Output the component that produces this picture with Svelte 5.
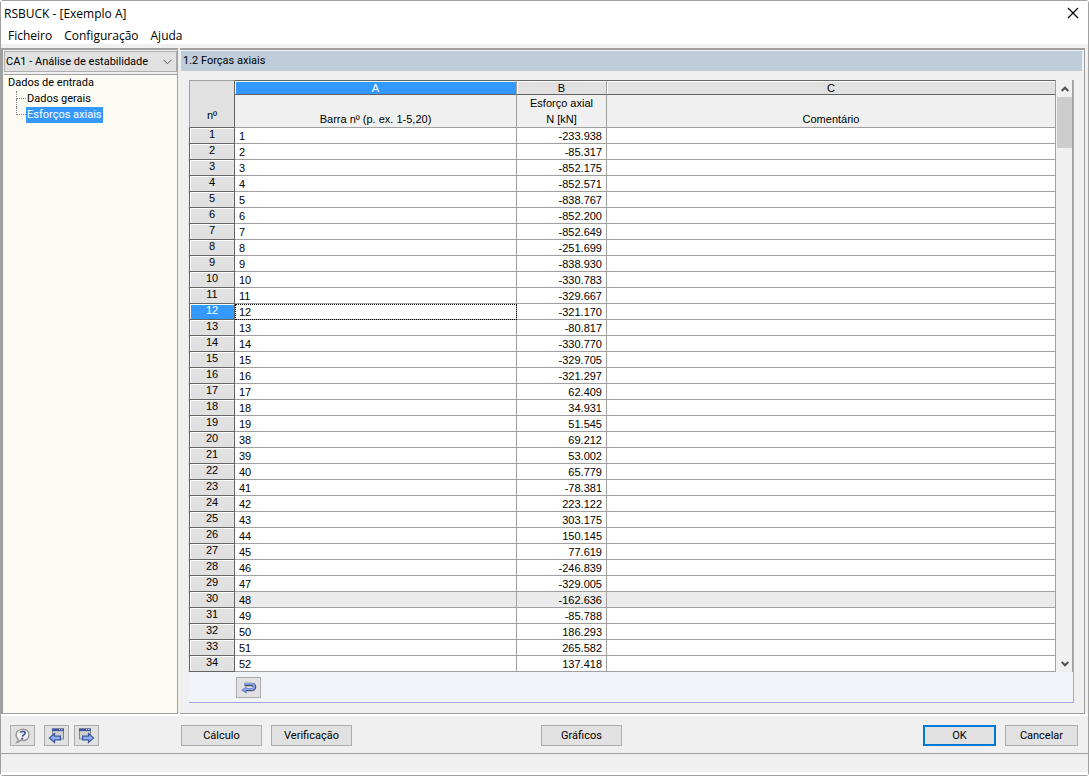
<script lang="ts">
  interface Row {
    bar: string;
    force: string;
  }

  const cases = ["CA1 - Análise de estabilidade"];
  const menus = ["Ficheiro", "Configuração", "Ajuda"];
  const pages = ["Dados gerais", "Esforços axiais"];

  const forces = [
    "-233.938", "-85.317", "-852.175", "-852.571", "-838.767", "-852.200",
    "-852.649", "-251.699", "-838.930", "-330.783", "-329.667", "-321.170",
    "-80.817", "-330.770", "-329.705", "-321.297", "62.409", "34.931",
    "51.545", "69.212", "53.002", "65.779", "-78.381", "223.122",
    "303.175", "150.145", "77.619", "-246.839", "-329.005", "-162.636",
    "-85.788", "186.293", "265.582", "137.418"
  ];

  // bar numbers jump from 19 to 38
  const rows: Row[] = forces.map((force, i) => ({
    bar: String(i < 19 ? i + 1 : i + 19),
    force
  }));

  let activeCase = $state(cases[0]);
  let activePage = $state("Esforços axiais");
  let selected = $state(11);
</script>

<div class="window">
  <header class="titlebar">
    <h1>RSBUCK - [Exemplo A]</h1>
    <button type="button" class="close" aria-label="Fechar">
      <svg width="12" height="12" viewBox="0 0 12 12">
        <path d="M1 1L11 11M11 1L1 11" stroke="#000" stroke-width="1.2" fill="none" />
      </svg>
    </button>
  </header>

  <nav class="menubar">
    {#each menus as menu}
      <button type="button">{menu}</button>
    {/each}
  </nav>

  <div class="body">
    <aside class="side">
      <div class="case">
        <select bind:value={activeCase} aria-label="Caso">
          {#each cases as item}
            <option>{item}</option>
          {/each}
        </select>
        <svg width="9" height="6" viewBox="0 0 9 6">
          <path d="M0.5 0.8L4.5 4.8L8.5 0.8" stroke="#555" fill="none" />
        </svg>
      </div>
      <div class="tree">
        <div class="root">Dados de entrada</div>
        <ul>
          {#each pages as page}
            <li>
              <span class="branch"></span>
              <button
                type="button"
                class:active={page === activePage}
                onclick={() => (activePage = page)}
              >{page}</button>
            </li>
          {/each}
        </ul>
      </div>
    </aside>

    <main class="content">
      <h2>1.2 Forças axiais</h2>
      <div class="sheet">
        <div class="grid">
          <table>
            <colgroup>
              <col class="col-no" />
              <col class="col-a" />
              <col class="col-b" />
              <col />
            </colgroup>
            <thead>
              <tr class="letters">
                <th rowspan="2" class="corner">nº</th>
                <th class="current">A</th>
                <th>B</th>
                <th>C</th>
              </tr>
              <tr class="names">
                <th>Barra nº (p. ex. 1-5,20)</th>
                <th>Esforço axial<br />N [kN]</th>
                <th>Comentário</th>
              </tr>
            </thead>
            <tbody>
              {#each rows as row, i}
                <tr class:selected={i === selected} class:shaded={i === 29} onclick={() => (selected = i)}>
                  <th scope="row">{i + 1}</th>
                  <td class="bar">{row.bar}</td>
                  <td class="force">{row.force}</td>
                  <td></td>
                </tr>
              {/each}
            </tbody>
          </table>
          <div class="scrollbar">
            <button type="button" aria-label="Para cima">
              <svg width="8" height="6" viewBox="0 0 8 6">
                <path d="M0.7 5L4 1.7L7.3 5" stroke="#505050" stroke-width="2" fill="none" />
              </svg>
            </button>
            <div class="thumb"></div>
            <button type="button" class="down" aria-label="Para baixo">
              <svg width="8" height="6" viewBox="0 0 8 6">
                <path d="M0.7 1L4 4.3L7.3 1" stroke="#505050" stroke-width="2" fill="none" />
              </svg>
            </button>
          </div>
        </div>
        <div class="tools">
          <button type="button" class="icon" aria-label="Anular">
            <svg width="16" height="12" viewBox="0 0 16 12">
              <path d="M3.5 2.5H10.5Q13.6 2.5 13.6 5T10.5 7.6H5" stroke="#4a5070" stroke-width="3.4" fill="none" />
              <path d="M0.3 8L5.5 4.4V11.4Z" fill="#5670b8" />
              <path d="M3 1.9H10.5Q13.2 2.1 13.2 4.8T10.5 7.2H4" stroke="#86a5f2" stroke-width="1.8" fill="none" />
              <path d="M1.5 7.8L5 5.6V9.6Z" fill="#86a5f2" />
            </svg>
          </button>
        </div>
      </div>
    </main>
  </div>

  <footer class="actions">
    <div class="group left">
      <button type="button" class="icon help" aria-label="Ajuda">
        <svg width="17" height="16" viewBox="0 0 17 16">
          <path d="M9 1.2C12.6 1.2 15 3.5 15 6.8S12.6 12.5 9 12.5Q7.6 12.5 6.6 12.1Q5.2 14 3 14.3Q4.3 12.8 4 11Q2 9.4 2 6.8C2 3.5 5 1.2 9 1.2Z" fill="#f4f4f4" stroke="#9a9a9a" stroke-width="1.6" />
          <path d="M6.3 4.8Q6.6 3.4 8.9 3.4T11 5.1Q11 6.3 9.6 7Q8.6 7.6 8.5 8.6" fill="none" stroke="#4a5a9a" stroke-width="1.9" />
          <circle cx="8.3" cy="10.6" r="1.1" fill="#4a5a9a" />
        </svg>
      </button>
      <button type="button" class="icon" aria-label="Página anterior">
        <svg width="17" height="16" viewBox="0 0 17 16">
          <rect x="4.5" y="1" width="11" height="10" fill="#cfcfcf" stroke="#858585" />
          <rect x="4" y="0.5" width="12" height="2.6" fill="#40539c" />
          <path d="M11 1.6H12M13.4 1.6H14.4" stroke="#fff" />
          <path d="M1.4 10L6.5 5.6V8.2H12.4V11.8H6.5V14.4Z" fill="#8fb0f2" stroke="#3a559f" stroke-width="1.2" />
        </svg>
      </button>
      <button type="button" class="icon" aria-label="Página seguinte">
        <svg width="17" height="16" viewBox="0 0 17 16">
          <rect x="1.5" y="1" width="11" height="10" fill="#cfcfcf" stroke="#858585" />
          <rect x="1" y="0.5" width="12" height="2.6" fill="#40539c" />
          <path d="M8 1.6H9M10.4 1.6H11.4" stroke="#fff" />
          <path d="M15.6 10L10.5 5.6V8.2H4.6V11.8H10.5V14.4Z" fill="#8fb0f2" stroke="#3a559f" stroke-width="1.2" />
        </svg>
      </button>
    </div>
    <div class="group">
      <button type="button" class="push">Cálculo</button>
      <button type="button" class="push">Verificação</button>
    </div>
    <div class="group">
      <button type="button" class="push">Gráficos</button>
    </div>
    <div class="group">
      <button type="button" class="push small default">OK</button>
      <button type="button" class="push small">Cancelar</button>
    </div>
  </footer>
  <div class="status"></div>
</div>

<style>
  :global(body) {
    margin: 0;
    background: #fff;
  }

  .window {
    --line: #a0a0a0;
    --face: #f0f0f0;
    --button: #e1e1e1;
    --blue: #3399ff;
    box-sizing: border-box;
    display: flex;
    flex-direction: column;
    min-height: 100vh;
    border: 1px solid var(--line);
    border-radius: 3px;
    background: var(--face);
    color: #000;
    font-family: Roboto, "Open Sans", sans-serif;
    font-size: 11px;
  }

  button {
    padding: 0;
    border: 0;
    background: none;
    color: inherit;
    font: inherit;
  }

  svg {
    display: block;
  }

  .titlebar {
    display: flex;
    align-items: center;
    justify-content: space-between;
    height: 24px;
    padding: 0 9px 0 3px;
    background: #fff;
    font-family: "Open Sans", "Noto Sans", sans-serif;
  }

  h1 {
    margin: 0;
    font-size: 12px;
    font-weight: 400;
  }

  .menubar {
    display: flex;
    gap: 12px;
    height: 19px;
    padding: 0 7px;
    background: #fff;
    font-family: "Open Sans", "Noto Sans", sans-serif;
    font-size: 12px;
    line-height: 21px;
  }

  .body {
    display: flex;
    flex: 1;
    gap: 2px;
    margin-top: 4px;
    border-bottom: 2px solid #fff;
  }

  .side {
    box-sizing: border-box;
    display: flex;
    flex-direction: column;
    width: 177px;
    border: 1px solid var(--line);
    border-width: 2px 1px 1px 2px;
  }

  .case {
    display: flex;
    align-items: center;
    margin: 1px 0 2px 1px;
    padding-right: 4px;
    border: 1px solid #adadad;
    background: var(--button);
  }

  .case select {
    flex: 1;
    min-width: 0;
    height: 19px;
    padding: 0 0 0 1px;
    border: 0;
    background: transparent;
    color: inherit;
    font: inherit;
    appearance: none;
  }

  .tree {
    flex: 1;
    margin-left: 1px;
    border-top: 1px solid var(--line);
    background: #fcfcf4;
    line-height: 16px;
  }

  .root {
    padding-left: 4px;
  }

  ul {
    margin: 0;
    padding: 0 0 0 12px;
    list-style: none;
  }

  li {
    display: flex;
    height: 16px;
  }

  li button {
    padding: 0 1px;
    line-height: 16px;
  }

  li button.active {
    background: var(--blue);
    color: #fff;
  }

  .branch {
    width: 10px;
  }

  .branch::before,
  .branch::after {
    content: "";
    display: block;
    box-sizing: border-box;
    height: 8px;
    border-left: 1px dotted #808080;
  }

  .branch::before {
    border-bottom: 1px dotted #808080;
  }

  li:last-child .branch::after {
    border: 0;
  }

  .content {
    display: flex;
    flex: 1;
    flex-direction: column;
    min-width: 0;
    margin-right: 3px;
    border: 1px solid var(--line);
    border-width: 2px 1px 1px 0;
  }

  h2 {
    margin: 1px 2px 0 1px;
    padding-left: 2px;
    background: #bfcddb;
    font-size: 11px;
    font-weight: 400;
    line-height: 20px;
  }

  .sheet {
    display: flex;
    flex: 1;
    flex-direction: column;
    margin: 9px 10px 10px 9px;
    border-right: 1px solid #a6a6ee;
    border-bottom: 1px solid #a6a6ee;
    background: #f0f4f9;
  }

  .grid {
    display: flex;
    background: var(--face);
  }

  table {
    flex: 1;
    min-width: 0;
    border-spacing: 0;
    table-layout: fixed;
    font-family: "Liberation Sans", Arial, sans-serif;
    font-size: 11px;
    line-height: 15px;
  }

  .col-no {
    width: 46px;
  }

  .col-a {
    width: 282px;
  }

  .col-b {
    width: 90px;
  }

  th,
  td {
    box-sizing: border-box;
    padding: 0;
    border: 0 solid var(--line);
    border-right-width: 1px;
    border-bottom-width: 1px;
    font-weight: 400;
  }

  .letters th {
    height: 15px;
    padding-top: 1px;
    border-top: 1px solid #646464;
    border-bottom-color: #646464;
    background: var(--button);
    line-height: 12px;
    box-shadow: inset 1px 1px #fff;
  }

  .letters .current {
    background: var(--blue);
    color: #fff;
  }

  .letters .corner {
    padding-bottom: 4px;
    border-top-color: var(--line);
    border-left: 1px solid var(--line);
    border-right-color: #646464;
    line-height: 15px;
    vertical-align: bottom;
    box-shadow: none;
  }

  .names th {
    height: 33px;
    line-height: 16px;
    vertical-align: bottom;
  }

  tbody th {
    height: 16px;
    padding-bottom: 2px;
    border-color: #646464;
    border-left-width: 1px;
    background: var(--button);
    line-height: 13px;
    box-shadow: inset 1px 1px #fff;
  }

  td {
    padding-top: 1px;
    background: #fff;
    line-height: 14px;
  }

  .bar {
    padding-left: 4px;
  }

  .force {
    padding-right: 4px;
    text-align: right;
  }

  .selected th {
    background: var(--blue);
    color: #fff;
  }

  .selected .bar {
    outline: 1px dotted #000;
    outline-offset: -1px;
  }

  .shaded td {
    background: #ebebeb;
  }

  .scrollbar {
    display: flex;
    flex-direction: column;
    width: 15px;
    padding-left: 1px;
    border-right: 1px solid var(--line);
  }

  .scrollbar button {
    display: flex;
    align-items: center;
    justify-content: center;
    height: 17px;
  }

  .scrollbar .down {
    margin-top: auto;
  }

  .thumb {
    height: 51px;
    background: #cdcdcd;
  }

  .tools {
    padding: 5px 47px 4px;
  }

  .icon,
  .push {
    box-sizing: border-box;
    height: 21px;
    border: 1px solid #adadad;
    background: var(--button);
  }

  .icon {
    display: flex;
    align-items: center;
    justify-content: center;
    width: 25px;
  }

  .actions {
    box-sizing: border-box;
    display: grid;
    grid-template-columns: 171px 360px 1fr auto;
    align-items: center;
    height: 38px;
    padding: 2px 10px 0 9px;
    border-bottom: 1px solid var(--line);
  }

  .group {
    display: flex;
    gap: 9px;
  }

  .left {
    gap: 5px;
  }

  .help {
    margin-right: 4px;
  }

  .push {
    width: 81px;
  }

  .small {
    width: 73px;
  }

  .default {
    border: 2px solid #0078d7;
  }

  .status {
    height: 18px;
    border-bottom: 3px solid #fff;
  }
</style>
